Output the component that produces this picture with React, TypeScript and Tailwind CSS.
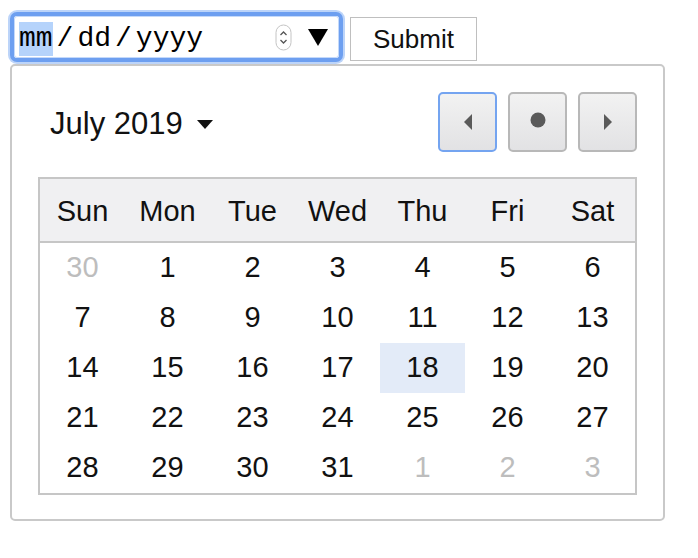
const DAYS = ['Sun', 'Mon', 'Tue', 'Wed', 'Thu', 'Fri', 'Sat']

const WEEKS: { d: number; out?: boolean }[][] = [
  [{ d: 30, out: true }, { d: 1 }, { d: 2 }, { d: 3 }, { d: 4 }, { d: 5 }, { d: 6 }],
  [{ d: 7 }, { d: 8 }, { d: 9 }, { d: 10 }, { d: 11 }, { d: 12 }, { d: 13 }],
  [{ d: 14 }, { d: 15 }, { d: 16 }, { d: 17 }, { d: 18 }, { d: 19 }, { d: 20 }],
  [{ d: 21 }, { d: 22 }, { d: 23 }, { d: 24 }, { d: 25 }, { d: 26 }, { d: 27 }],
  [{ d: 28 }, { d: 29 }, { d: 30 }, { d: 31 }, { d: 1, out: true }, { d: 2, out: true }, { d: 3, out: true }],
]

function Spinner() {
  return (
    <svg width="17" height="27" viewBox="0 0 17 27">
      <rect x="1" y="1" width="15" height="25" rx="7.5" fill="#fff" stroke="#c4c4c4" />
      <path d="M5.5 11 L8.5 8 L11.5 11" fill="none" stroke="#555" strokeWidth="1.3" />
      <path d="M5.5 16 L8.5 19 L11.5 16" fill="none" stroke="#555" strokeWidth="1.3" />
    </svg>
  )
}

function NavButton({ focused, children }: { focused?: boolean; children: React.ReactNode }) {
  return (
    <button
      className={
        focused
          ? 'w-[59px] h-[60px] flex items-center justify-center rounded-[5px] border-2 border-[#74a4f0] bg-gradient-to-b from-[#f2f2f2] to-[#e2e2e4]'
          : 'w-[59px] h-[60px] flex items-center justify-center rounded-[5px] border-2 border-[#b8b8b8] bg-gradient-to-b from-[#f2f2f2] to-[#e2e2e4]'
      }
    >
      {children}
    </button>
  )
}

export default function App() {
  return (
    <div className="w-[698px] h-[558px] bg-white pl-[10px] pt-[12px]" style={{ fontFamily: '"Liberation Sans", Arial, sans-serif' }}>
      {/* Input row */}
      <div className="flex items-start">
        <div className="relative z-10 w-[333px] h-[50px] rounded-[7px] border-[4px] border-[#6d9ff0] shadow-[0_0_0_2px_#bcd4f9] bg-white flex items-center">
          <div className="flex-1 h-full rounded-[3px] border border-[#c4d9fa] flex items-center pl-[4px] pr-[10px]">
            <span className="flex items-center mt-[4px] text-[28px] leading-none text-black" style={{ fontFamily: '"Liberation Mono", "Courier New", monospace' }}>
              <span className="bg-[#b5d3fb] py-[3px]">mm</span>
              <span className="mx-[4px]">/</span>
              <span>dd</span>
              <span className="mx-[4px]">/</span>
              <span>yyyy</span>
            </span>
            <div className="ml-auto flex items-center gap-[16px]">
              <Spinner />
              <svg width="20" height="17" viewBox="0 0 20 17">
                <path d="M0 0 H20 L10 17 Z" fill="#000" />
              </svg>
            </div>
          </div>
        </div>
        <button className="ml-[7px] mt-[5px] w-[127px] h-[44px] border border-[#bfbfbf] bg-white text-[26px] leading-none text-[#111]">
          Submit
        </button>
      </div>

      {/* Popup */}
      <div className="mt-[2px] w-[655px] h-[457px] rounded-[5px] border-2 border-[#c9c9c9] bg-white px-[26px] pt-[26px]">
        <div className="flex items-center justify-between h-[60px]">
          <div className="flex items-center pl-[12px] pt-[4px]">
            <span className="text-[31px] text-[#111]">July 2019</span>
            <svg width="16" height="10" viewBox="0 0 16 10" className="ml-[14px] mt-[2px]">
              <path d="M0 0 H16 L8 9 Z" fill="#111" />
            </svg>
          </div>
          <div className="flex gap-[11px]">
            <NavButton focused>
              <svg width="10" height="16" viewBox="0 0 10 16">
                <path d="M9 0 V16 L1 8 Z" fill="#5a5a5a" />
              </svg>
            </NavButton>
            <NavButton>
              <svg width="16" height="16" viewBox="0 0 16 16" className="-mt-[4px]">
                <circle cx="8" cy="8" r="7.5" fill="#5a5a5a" />
              </svg>
            </NavButton>
            <NavButton>
              <svg width="10" height="16" viewBox="0 0 10 16">
                <path d="M1 0 V16 L9 8 Z" fill="#5a5a5a" />
              </svg>
            </NavButton>
          </div>
        </div>

        <div className="mt-[25px] border-2 border-[#c6c6c6]">
          <div className="grid grid-cols-7 h-[64px] bg-[#f0f0f2] border-b-2 border-[#c6c6c6] items-center">
            {DAYS.map((d) => (
              <div key={d} className="text-center text-[29px] text-[#111] pt-[3px]">
                {d}
              </div>
            ))}
          </div>
          <div>
            {WEEKS.map((week, i) => (
              <div key={i} className="grid grid-cols-7 h-[50px]">
                {week.map((c, j) => (
                  <div
                    key={j}
                    className={
                      c.d === 18 && !c.out
                        ? 'flex items-center justify-center text-[29px] text-[#111] bg-[#e3ebf8]'
                        : c.out
                          ? 'flex items-center justify-center text-[29px] text-[#bdbdbd]'
                          : 'flex items-center justify-center text-[29px] text-[#111]'
                    }
                  >
                    {c.d}
                  </div>
                ))}
              </div>
            ))}
          </div>
        </div>
      </div>
    </div>
  )
}
